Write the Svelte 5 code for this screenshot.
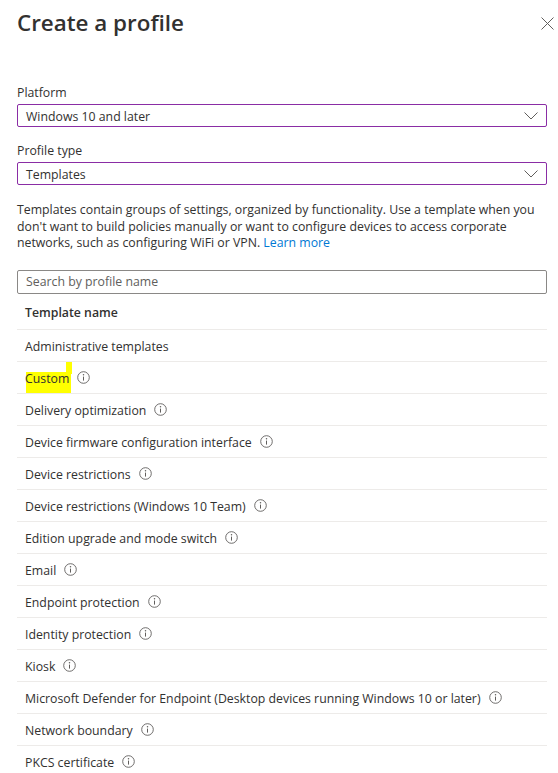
<script>
  const rows = [
    { name: 'Administrative templates', info: false },
    { name: 'Custom', info: true, mark: true },
    { name: 'Delivery optimization', info: true },
    { name: 'Device firmware configuration interface', info: true },
    { name: 'Device restrictions', info: true },
    { name: 'Device restrictions (Windows 10 Team)', info: true },
    { name: 'Edition upgrade and mode switch', info: true },
    { name: 'Email', info: true },
    { name: 'Endpoint protection', info: true },
    { name: 'Identity protection', info: true },
    { name: 'Kiosk', info: true },
    { name: 'Microsoft Defender for Endpoint (Desktop devices running Windows 10 or later)', info: true },
    { name: 'Network boundary', info: true },
    { name: 'PKCS certificate', info: true }
  ];
  const selects = [
    { label: 'Platform', value: 'Windows 10 and later' },
    { label: 'Profile type', value: 'Templates' }
  ];
</script>

<main class="page">
  <header class="head">
    <h1>Create a profile</h1>
    <svg class="close" viewBox="0 0 13 13" width="13" height="13" aria-label="Close">
      <path d="M.5.5l12 12M12.5.5l-12 12" />
    </svg>
  </header>

  {#each selects as s}
    <div class="field">
      <div class="label">{s.label}</div>
      <div class="select">
        <span>{s.value}</span>
        <svg viewBox="0 0 14 8" width="14" height="8"><path d="M.5.5L7 7 13.5.5" /></svg>
      </div>
    </div>
  {/each}

  <p class="desc">Templates contain groups of settings, organized by functionality. Use a template when you don't want to build policies manually or want to configure devices to access corporate networks, such as configuring WiFi or VPN. <a href="#more">Learn more</a></p>

  <div class="search">Search by profile name</div>

  <div class="th">Template name</div>
  {#each rows as r}
    <div class="row">
      <span class="name" class:mark={r.mark}>{r.name}</span>
      {#if r.info}
        <svg class="info" viewBox="0 0 13 13" width="13" height="13">
          <circle cx="6.5" cy="6.5" r="5.8" />
          <path d="M6.5 5.6v4" />
          <circle class="dot" cx="6.5" cy="3.8" r=".75" />
        </svg>
      {/if}
    </div>
  {/each}
</main>

<style>
  :global(body) {
    margin: 0;
    background: #fff;
    overflow: hidden;
  }
  .page {
    height: 773px;
    overflow: hidden;
    box-sizing: border-box;
    padding: 0 11px 0 17px;
    font-family: "Open Sans", "Noto Sans", sans-serif;
    font-size: 12.3px;
    color: #323130;
  }
  .head {
    display: flex;
    justify-content: space-between;
    height: 78px;
    margin-right: -8px;
  }
  h1 {
    margin: 6px 0 0;
    font-size: 22.4px;
    line-height: 34px;
    font-weight: 600;
    color: #323130;
  }
  .close {
    margin: 17px 1px 0 0;
  }
  .close path {
    fill: none;
    stroke: #605e5c;
    stroke-width: 1;
  }
  .field {
    margin-bottom: 9px;
  }
  .label {
    height: 26px;
    line-height: 30px;
  }
  .select {
    height: 23px;
    box-sizing: border-box;
    border: 1px solid #8a2da5;
    border-radius: 2px;
    padding: 1px 8px 0;
    display: flex;
    align-items: center;
    justify-content: space-between;
  }
  .select path {
    fill: none;
    stroke: #605e5c;
    stroke-width: 1;
  }
  .desc {
    margin: 17px 0 0;
    line-height: 16.5px;
    height: 68px;
  }
  .desc a {
    color: #0078d4;
    text-decoration: none;
  }
  .search {
    height: 24px;
    box-sizing: border-box;
    border: 1px solid #8a8886;
    border-radius: 2px;
    padding: 0 8px;
    line-height: 21px;
    color: #605e5c;
  }
  .th {
    height: 36px;
    box-sizing: border-box;
    padding: 1px 8px 0;
    line-height: 36px;
    font-weight: 600;
    border-bottom: 1px solid #edebe9;
  }
  .row {
    height: 32px;
    box-sizing: border-box;
    padding: 2px 8px 0;
    display: flex;
    align-items: center;
    gap: 8px;
    border-bottom: 1px solid #edebe9;
  }
  .name {
    position: relative;
    white-space: nowrap;
  }
  .info {
    margin-top: -2px;
  }
  .mark::before {
    content: "";
    position: absolute;
    z-index: -1;
    left: 1px;
    right: -2px;
    top: 2px;
    bottom: -6px;
    background: #ffff00;
  }
  .mark::after {
    content: "";
    position: absolute;
    z-index: -1;
    right: -3px;
    width: 6px;
    top: -8px;
    height: 12px;
    background: #ffff00;
  }
  .info circle {
    fill: none;
    stroke: #605e5c;
    stroke-width: 0.9;
  }
  .info path {
    fill: none;
    stroke: #605e5c;
    stroke-width: 1;
  }
  .info .dot {
    fill: #605e5c;
    stroke: none;
  }
</style>
